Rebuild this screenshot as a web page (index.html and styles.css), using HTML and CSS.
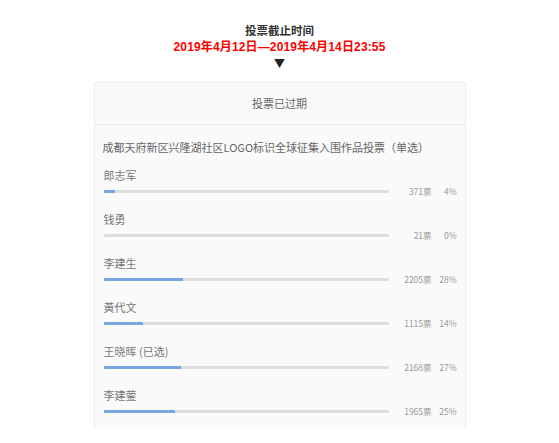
FILE: index.html
```html
<!DOCTYPE html>
<html lang="zh">
<head>
<meta charset="utf-8">
<title>投票</title>
<link rel="stylesheet" href="styles.css">
</head>
<body>
<div class="page">
  <div class="deadline">
    <div class="deadline-label">投票截止时间</div>
    <div class="deadline-date">2019年4月12日—2019年4月14日23:55</div>
    <div class="arrow">▼</div>
  </div>
  <div class="card">
    <div class="card-head">投票已过期</div>
    <div class="card-body">
      <div class="poll-title">成都天府新区兴隆湖社区LOGO标识全球征集入围作品投票（单选）</div>
      <div class="option">
        <div class="name">郎志军</div>
        <div class="row"><div class="bar"><div class="fill" style="width:4%"></div></div><span class="count">371票</span><span class="pct">4%</span></div>
      </div>
      <div class="option">
        <div class="name">钱勇</div>
        <div class="row"><div class="bar"><div class="fill" style="width:0%"></div></div><span class="count">21票</span><span class="pct">0%</span></div>
      </div>
      <div class="option">
        <div class="name">李建生</div>
        <div class="row"><div class="bar"><div class="fill" style="width:28%"></div></div><span class="count">2205票</span><span class="pct">28%</span></div>
      </div>
      <div class="option">
        <div class="name">黃代文</div>
        <div class="row"><div class="bar"><div class="fill" style="width:14%"></div></div><span class="count">1115票</span><span class="pct">14%</span></div>
      </div>
      <div class="option">
        <div class="name">王晓晖 (已选)</div>
        <div class="row"><div class="bar"><div class="fill" style="width:27%"></div></div><span class="count">2168票</span><span class="pct">27%</span></div>
      </div>
      <div class="option">
        <div class="name">李建蓥</div>
        <div class="row"><div class="bar"><div class="fill" style="width:25%"></div></div><span class="count">1965票</span><span class="pct">25%</span></div>
      </div>
    </div>
  </div>
</div>
</body>
</html>
```
FILE: styles.css
```css
html, body {
  margin: 0;
  padding: 0;
  background: #fff;
}
body {
  font-family: "Noto Sans CJK SC", "Noto Sans", sans-serif;
  color: #666;
}
.page {
  display: flex;
  flex-direction: column;
  align-items: center;
  padding-top: 22px;
}
.deadline {
  display: flex;
  flex-direction: column;
  align-items: center;
}
.deadline-label {
  font-size: 11.5px;
  font-weight: bold;
  color: #333;
  line-height: 17px;
}
.deadline-date {
  font-family: "Liberation Sans", "Noto Sans CJK SC", sans-serif;
  font-size: 12px;
  font-weight: bold;
  letter-spacing: 0.15px;
  color: #f00;
  line-height: 17px;
}
.arrow {
  font-size: 11px;
  color: #222;
  line-height: 15px;
}
.card {
  margin-top: 11px;
  width: 370px;
  height: 344px;
  border: 1px solid #ececec;
  border-bottom: none;
  background: #fafafa;
  overflow: hidden;
}
.card-head {
  height: 41px;
  line-height: 41px;
  text-align: center;
  font-size: 11px;
  color: #666;
  border-bottom: 1px solid #ececec;
}
.card-body {
  padding: 12px 8px 0 8px;
}
.poll-title {
  font-size: 11px;
  line-height: 20px;
  color: #666;
  margin-bottom: 8px;
}
.option {
  padding-bottom: 12px;
}
.name {
  font-size: 11px;
  line-height: 20px;
  color: #777;
  padding-left: 1px;
}
.row {
  display: flex;
  align-items: center;
  height: 12px;
}
.bar {
  width: 286px;
  margin-left: 1px;
  height: 3px;
  background: #ddd;
  border-radius: 1px;
  overflow: hidden;
}
.fill {
  height: 100%;
  background: #78a6e0;
}
.count {
  width: 43px;
  text-align: right;
  font-size: 8.5px;
  color: #999;
}
.pct {
  width: 25px;
  text-align: right;
  font-size: 8.5px;
  color: #999;
}
```
